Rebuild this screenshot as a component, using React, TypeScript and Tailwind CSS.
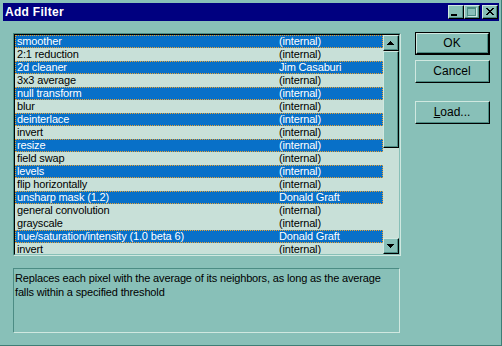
import React from "react";

const rows: [string, string, boolean][] = [
  ["smoother", "(internal)", true],
  ["2:1 reduction", "(internal)", false],
  ["2d cleaner", "Jim Casaburi", true],
  ["3x3 average", "(internal)", false],
  ["null transform", "(internal)", true],
  ["blur", "(internal)", false],
  ["deinterlace", "(internal)", true],
  ["invert", "(internal)", false],
  ["resize", "(internal)", true],
  ["field swap", "(internal)", false],
  ["levels", "(internal)", true],
  ["flip horizontally", "(internal)", false],
  ["unsharp mask (1.2)", "Donald Graft", true],
  ["general convolution", "(internal)", false],
  ["grayscale", "(internal)", false],
  ["hue/saturation/intensity (1.0 beta 6)", "Donald Graft", true],
  ["invert", "(internal)", false],
];

function Raised({ className, children }: { className?: string; children?: React.ReactNode }) {
  return (
    <div className={"border-t border-l border-t-[#d0e8e0] border-l-[#d0e8e0] border-r border-b border-r-black border-b-black " + (className ?? "")}>
      <div className="w-full h-full border-r border-b border-r-[#4c8c84] border-b-[#4c8c84] bg-[#88c0b8] flex items-center justify-center">
        {children}
      </div>
    </div>
  );
}

function Btn({ children, def }: { children: React.ReactNode; def?: boolean }) {
  if (def) {
    return (
      <div className="w-[75px] h-[23px] border border-black">
        <Raised className="w-full h-full">{children}</Raised>
      </div>
    );
  }
  return <Raised className="w-[75px] h-[23px]">{children}</Raised>;
}

export default function App() {
  return (
    <div
      className="w-[502px] h-[346px] bg-[#88c0b8] border-r border-b border-r-[#3e7e76] border-b-[#3e7e76] pt-[3px] pl-[3px] pr-[2px] flex flex-col text-black"
      style={{ fontFamily: '"Liberation Sans", Arial, sans-serif' }}
    >
      {/* title bar */}
      <div className="h-[18px] bg-[#000080] flex items-center pl-[2px] pr-[1px]">
        <span className="text-white font-bold text-[12px] leading-none tracking-[0.3px] flex-1">Add Filter</span>
        <div className="flex items-center">
          <Raised className="w-[16px] h-[14px]">
            <div className="w-[6px] h-[2px] bg-black mt-[6px] mr-[3px]" />
          </Raised>
          <Raised className="w-[16px] h-[14px]">
            <div className="w-[9px] h-[9px] border border-[#4c8c84] shadow-[1px_1px_0_#d0e8e0] border-t-2" />
          </Raised>
          <Raised className="w-[16px] h-[14px] ml-[2px]">
            <svg width="8" height="7" viewBox="0 0 8 7" shapeRendering="crispEdges">
              <path d="M0 0h2v1h-2zM6 0h2v1h-2zM1 1h2v1h-2zM5 1h2v1h-2zM2 2h4v1h-4zM3 3h2v1h-2zM2 4h4v1h-4zM1 5h2v1h-2zM5 5h2v1h-2zM0 6h2v1h-2zM6 6h2v1h-2z" fill="black" />
            </svg>
          </Raised>
        </div>
      </div>

      {/* body */}
      <div className="flex pl-[10px]">
        <div className="flex flex-col">
          {/* listbox */}
          <div className="mt-[12px] w-[388px] h-[223px] border-t border-l border-t-[#4c8c84] border-l-[#4c8c84] border-b border-r border-b-[#d0e8e0] border-r-[#d0e8e0]">
            <div className="w-full h-full border-t border-l border-t-black border-l-black border-b border-r border-b-[#88c0b8] border-r-[#88c0b8] bg-[#c8e0d8] flex overflow-hidden">
              <div className="flex-1 flex flex-col text-[11px] leading-[11px] tracking-[-0.15px]">
                {rows.map(([name, author, sel], i) => (
                  <div
                    key={i}
                    className={
                      "h-[13px] shrink-0 flex items-center pl-[1px] border " +
                      (sel
                        ? "bg-[#0870c8] text-white border-dotted border-[#e8a030]"
                        : "border-transparent")
                    }
                  >
                    <span className="w-[262px] whitespace-nowrap">{name}</span>
                    <span className="whitespace-nowrap">{author}</span>
                  </div>
                ))}
              </div>
              {/* scrollbar */}
              <div className="w-[16px] flex flex-col bg-[#c8e0d8]">
                <Raised className="w-[16px] h-[16px] shrink-0">
                  <svg width="7" height="4" viewBox="0 0 7 4" shapeRendering="crispEdges">
                    <path d="M3 0h1v1h-1zM2 1h3v1h-3zM1 2h5v1h-5zM0 3h7v1h-7z" fill="black" />
                  </svg>
                </Raised>
                <Raised className="w-[16px] h-[97px] shrink-0" />
                <div className="flex-1" />
                <Raised className="w-[16px] h-[16px] shrink-0">
                  <svg width="7" height="4" viewBox="0 0 7 4" shapeRendering="crispEdges">
                    <path d="M0 0h7v1h-7zM1 1h5v1h-5zM2 2h3v1h-3zM3 3h1v1h-1z" fill="black" />
                  </svg>
                </Raised>
              </div>
            </div>
          </div>
          {/* description */}
          <div className="mt-[12px] w-[387px] h-[65px] border-t border-l border-t-[#4c8c84] border-l-[#4c8c84] border-b border-r border-b-[#d0e8e0] border-r-[#d0e8e0] px-[1px] pt-[2px] text-[11px] leading-[14px] tracking-[-0.15px]">
            Replaces each pixel with the average of its neighbors, as long as the average falls within a specified threshold
          </div>
        </div>

        {/* buttons */}
        <div className="ml-[14px] mt-[11px] flex flex-col text-[12px] leading-none">
          <Btn def>OK</Btn>
          <div className="h-[5px]" />
          <Btn>Cancel</Btn>
          <div className="h-[18px]" />
          <Btn>
            <span>
              <span className="underline">L</span>oad...
            </span>
          </Btn>
        </div>
      </div>
    </div>
  );
}
